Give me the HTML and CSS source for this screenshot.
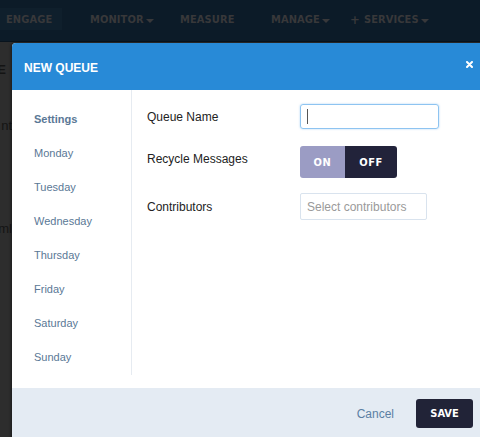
FILE: index.html
```html
<!DOCTYPE html>
<html>
<head>
<meta charset="utf-8">
<link rel="stylesheet" href="styles.css">
</head>
<body>
<div class="page">
  <nav class="topnav">
    <div class="nav-cell"><span class="nav-item nav-active">ENGAGE</span></div>
    <div class="nav-cell"><span class="nav-item">MONITOR<i class="caret"></i></span></div>
    <div class="nav-cell"><span class="nav-item">MEASURE</span></div>
    <div class="nav-cell"><span class="nav-item">MANAGE<i class="caret"></i></span></div>
    <div class="nav-cell"><span class="nav-item"><b class="plus">+</b>SERVICES<i class="caret"></i></span></div>
  </nav>
  <div class="backdrop">
    <div class="strip">
      <div class="strip-line strip-title">E</div>
      <div class="strip-line strip-a">nt</div>
      <div class="strip-line strip-b">ml</div>
    </div>
  </div>

  <div class="modal">
    <header class="modal-head">
      <h1 class="modal-title">NEW QUEUE</h1>
      <span class="modal-close"><svg width="7" height="7" viewBox="0 0 7 7"><path d="M1 1L6 6M6 1L1 6" stroke="#fff" stroke-width="2" stroke-linecap="round"/></svg></span>
    </header>
    <div class="modal-body">
      <ul class="side">
        <li class="side-item side-active">Settings</li>
        <li class="side-item">Monday</li>
        <li class="side-item">Tuesday</li>
        <li class="side-item">Wednesday</li>
        <li class="side-item">Thursday</li>
        <li class="side-item">Friday</li>
        <li class="side-item">Saturday</li>
        <li class="side-item">Sunday</li>
      </ul>
      <div class="form">
        <div class="row row-name">
          <label class="label">Queue Name</label>
          <div class="input input-focus"><span class="cursor"></span></div>
        </div>
        <div class="row row-recycle">
          <label class="label">Recycle Messages</label>
          <div class="toggle"><span class="tog tog-on">ON</span><span class="tog tog-off">OFF</span></div>
        </div>
        <div class="row row-contrib">
          <label class="label">Contributors</label>
          <div class="select">Select contributors</div>
        </div>
      </div>
    </div>
    <footer class="modal-foot">
      <span class="cancel">Cancel</span>
      <span class="save">SAVE</span>
    </footer>
  </div>
</div>
</body>
</html>
```

FILE: styles.css
```css
* { box-sizing: border-box; }
html, body { margin: 0; padding: 0; }
body {
  width: 480px;
  height: 437px;
  overflow: hidden;
  background: #2c2c2c;
  font-family: "Liberation Sans", Arial, sans-serif;
}
.page { position: relative; width: 480px; height: 437px; overflow: hidden; }

.topnav {
  height: 42px;
  background: #0c1b28;
  border-bottom: 1px solid #08131d;
  display: grid;
  grid-template-columns: 90px 90px 91px 79px 1fr;
  align-items: center;
}
.nav-cell { display: flex; align-items: center; height: 100%; }
.nav-item {
  font-family: "DejaVu Sans Condensed", "DejaVu Sans", sans-serif;
  font-weight: bold;
  font-size: 11px;
  color: #38383a;
  display: flex;
  align-items: center;
  letter-spacing: 0.1px;
}
.nav-active {
  background: #0f1f2c;
  width: 62px;
  height: 22px;
  padding-left: 6px;
  margin-top: -3px;
}
.nav-cell .nav-item { margin-top: -3px; }
.caret {
  display: inline-block;
  width: 0; height: 0;
  border-left: 4px solid transparent;
  border-right: 4px solid transparent;
  border-top: 4px solid #38383a;
  margin-left: 2px;
  margin-top: 3px;
}
.plus { font-size: 13px; margin-right: 4px; }

.backdrop { height: 395px; }
.strip {
  width: 12px;
  height: 100%;
  background: #2d2d2d;
  display: flex;
  flex-direction: column;
}
.strip-line {
  display: flex;
  justify-content: flex-end;
  white-space: nowrap;
  color: #141414;
  font-size: 13px;
}
.strip-title { font-weight: bold; padding-right: 6px; margin-top: 20px; }
.strip-a { margin-top: 41px; }
.strip-b { margin-top: 88px; }

.modal {
  position: absolute;
  left: 12px;
  top: 43px;
  width: 480px;
  background: #fff;
  border-radius: 4px 4px 0 0;
  overflow: hidden;
  box-shadow: -1px 0 3px rgba(0,0,0,0.4);
}
.modal-head {
  height: 47px;
  background: #288ad7;
  display: flex;
  align-items: center;
  justify-content: space-between;
  padding: 0 19px 0 12px;
}
.modal-title {
  margin: 0;
  font-size: 12px;
  font-weight: bold;
  color: #fff;
  margin-top: 2px;
}
.modal-close { display: flex; margin-bottom: 4px; }

.modal-body {
  height: 298px;
  display: flex;
  padding-bottom: 13px;
}
.side {
  list-style: none;
  margin: 0;
  padding: 12px 0 0 22px;
  width: 120px;
  border-right: 1px solid #e6ebf1;
}
.side-item {
  height: 34px;
  line-height: 34px;
  font-size: 11px;
  color: #5a7896;
}
.side-active { font-weight: bold; }

.form {
  flex: 1;
  padding: 14px 0 0 15px;
  display: flex;
  flex-direction: column;
}
.row { display: flex; align-items: flex-start; }
.label {
  width: 153px;
  font-size: 12px;
  color: #222;
  line-height: 25px;
  padding-top: 1px;
}
.row-recycle { margin-top: 16px; }
.row-contrib { margin-top: 15px; }
.row-contrib .label { line-height: 27px; }

.input {
  width: 139px;
  height: 25px;
  border: 1px solid #d9e3ee;
  border-radius: 3px;
  display: flex;
  align-items: center;
  padding-left: 6px;
}
.input-focus {
  border-color: #8ec4f1;
  box-shadow: 0 0 2px rgba(102,175,233,0.6);
}
.cursor { width: 1px; height: 15px; background: #555; }

.toggle {
  display: flex;
  height: 32px;
  width: 97px;
  border-radius: 3px;
  overflow: hidden;
}
.tog {
  display: flex;
  align-items: center;
  justify-content: center;
  font-family: "DejaVu Sans Condensed", "DejaVu Sans", sans-serif;
  font-weight: bold;
  font-size: 11px;
  letter-spacing: 0.6px;
  color: #fff;
}
.tog-on { width: 45px; background: #9b9cc4; }
.tog-off { flex: 1; background: #22233a; }

.select {
  width: 127px;
  height: 27px;
  border: 1px solid #d9e3ee;
  border-radius: 2px;
  font-size: 12px;
  color: #9a9a9a;
  display: flex;
  align-items: center;
  padding-left: 6px;
  white-space: nowrap;
}

.modal-foot {
  height: 51px;
  background: #e4ebf3;
  display: flex;
  align-items: center;
  justify-content: flex-end;
  padding-right: 19px;
}
.cancel { font-size: 12px; color: #5b7fa3; margin-right: 22px; margin-top: 1px; }
.save {
  width: 57px;
  height: 29px;
  background: #212337;
  border-radius: 3px;
  color: #fff;
  font-family: "DejaVu Sans Condensed", "DejaVu Sans", sans-serif;
  font-weight: bold;
  font-size: 11px;
  display: flex;
  align-items: center;
  justify-content: center;
}
```
